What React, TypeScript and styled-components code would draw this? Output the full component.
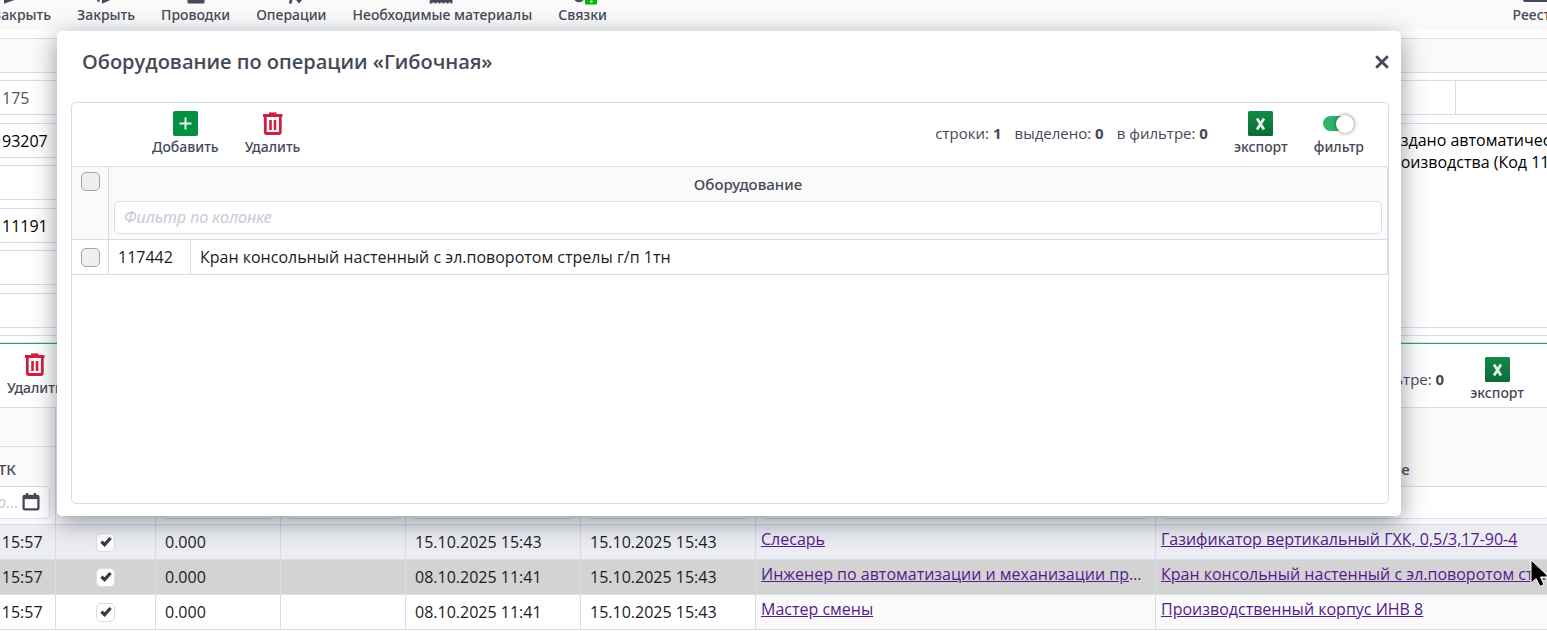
import React, { useState } from "react";
import styled, { createGlobalStyle, css } from "styled-components";

const line = "#d9dbe8";
const ink = "#454957";
const shade = "#fafafa";
const labelFont = '"Noto Sans", "Open Sans", sans-serif';

const GlobalStyle = createGlobalStyle`
  *, *::before, *::after { box-sizing: border-box; }
  html { overflow: hidden; }
  body { margin: 0; background: #fff; color: #1b1b1f; font: 400 16px/22px "Open Sans", "Noto Sans", sans-serif; }
  button, input, textarea { font: inherit; color: inherit; margin: 0; }
  table { border-collapse: separate; border-spacing: 0; table-layout: fixed; }
  th, td { padding: 0; }
`;

const Page = styled.div`
  position: relative;
  overflow: hidden;
  min-height: 100vh;
`;

const MenuBar = styled.nav`
  display: flex;
  align-items: flex-end;
  height: 30px;
  padding-bottom: 5px;
  overflow: hidden;
  background: ${shade};
`;

const MenuGroup = styled.div<{ $end?: boolean }>`
  display: flex;
  gap: 26px;
  margin-left: ${(p) => (p.$end ? "auto" : "-7px")};
  margin-right: ${(p) => (p.$end ? "-12px" : "0")};
`;

const controlLabel = css`
  display: flex;
  flex-direction: column;
  align-items: center;
  gap: 1px;
  color: ${ink};
  font-family: ${labelFont};
  font-size: 14px;
  font-weight: 500;
  line-height: 20px;
  white-space: nowrap;
  cursor: pointer;
`;

const ToolButton = styled.button`
  ${controlLabel}
  padding: 0;
  border: 0;
  background: none;
  svg { display: block; overflow: visible; }
`;

const Form = styled.form`
  padding-top: 8px;
`;

const Heading = styled.div`
  height: 35px;
  border: solid ${line};
  border-width: 1px 0;
  background: ${shade};
`;

const FormGrid = styled.div`
  display: grid;
  grid-template-columns: 1fr 175px;
  padding: 7px 0;
`;

const FieldPairs = styled.div`
  display: grid;
  gap: 7px;
`;

const FieldPair = styled.div`
  display: grid;
  gap: 8px;
`;

const fieldBox = css`
  border: solid ${line};
  border-width: 1px 0;
  border-radius: 0;
  background: #fff;
  outline: none;
`;

const Field = styled.input`
  ${fieldBox}
  width: 100%;
  height: 35px;
  padding: 0 2px;
  color: #000;
  &:disabled { color: #555; }
`;

const NotesColumn = styled.div`
  display: grid;
  grid-template-rows: 35px 1fr;
  gap: 8px;
`;

const SplitField = styled.div`
  display: grid;
  grid-template-columns: 83px 1fr;
  ${Field} + ${Field} { border-left-width: 1px; }
`;

const Notes = styled.textarea`
  ${fieldBox}
  width: 300px;
  padding: 5px 9px;
  color: #000;
  resize: none;
  overflow: hidden;
`;

const Section = styled.section`
  border-top: 1px solid ${line};
`;

const GridBar = styled.div<{ $accent?: boolean }>`
  display: flex;
  align-items: flex-start;
  justify-content: space-between;
  height: ${(p) => (p.$accent ? "65px" : "64px")};
  border-bottom: 1px solid ${line};
  ${(p) => p.$accent && "margin-top: 7px; border-top: 1px solid #2fa071; box-shadow: 0 -1px #cfeadf;"}
`;

const Actions = styled.div<{ $inset: number }>`
  display: flex;
  gap: 26px;
  padding: 8px 0 0 ${(p) => p.$inset}px;
`;

const Summary = styled.div<{ $inset: number; $top: number }>`
  display: flex;
  gap: 26px;
  padding: ${(p) => p.$top}px ${(p) => p.$inset}px 0 0;
`;

const Counters = styled.div`
  display: flex;
  gap: 13px;
  padding-top: 12px;
  color: ${ink};
  font-size: 15px;
  line-height: 20px;
  white-space: nowrap;
`;

const ScrolledTable = styled.div`
  margin-left: -93px;
`;

const JobsTable = styled.table`
  width: 1649px;
`;

const HeadCell = styled.th<{ $group?: boolean }>`
  height: ${(p) => (p.$group ? "39px" : "78px")};
  padding: 0 5px 5px;
  border: solid ${line};
  border-width: 0 1px 1px 0;
  background: ${shade};
  color: ${ink};
  font-family: ${labelFont};
  font-size: 15px;
  font-weight: 500;
  line-height: 22px;
  text-align: center;
  vertical-align: bottom;
`;

const FilterBox = styled.div`
  display: flex;
  align-items: center;
  height: 33px;
  margin-top: 6px;
  padding: 0 9px 2px;
  border: 1px solid ${line};
  border-radius: 5px;
  background: #fff;
  svg { flex: none; }
`;

const FilterInput = styled.input`
  flex: 1;
  min-width: 0;
  padding: 0;
  border: 0;
  outline: 0;
  background: none;
  font-size: 16px;
  font-weight: 400;
  text-overflow: ellipsis;
  &::placeholder { color: #c5cbd8; font-style: italic; opacity: 1; }
`;

const rowColours = { hover: "#ecedf2", selected: "#d3d3d3", plain: "#fff" };

const Row = styled.tr<{ $tone: keyof typeof rowColours }>`
  background: ${(p) => rowColours[p.$tone]};
`;

const Cell = styled.td<{ $kind?: "link" | "check"; $soft?: boolean }>`
  height: 35px;
  padding: 0 9px;
  border: solid ${line};
  border-width: 0 1px 1px 0;
  overflow: hidden;
  white-space: nowrap;
  ${(p) => p.$soft && `background: ${shade};`}
  ${(p) => p.$kind === "link" && "padding: 0 5px 6px;"}
  ${(p) => p.$kind === "check" && "padding: 0;"}
`;

const CellLink = styled.a`
  display: block;
  overflow: hidden;
  color: #551a8b;
  text-overflow: ellipsis;
`;

const Tick = styled.span`
  display: grid;
  justify-content: center;
  > * { grid-area: 1 / 1; place-self: center; }
  svg { pointer-events: none; }
`;

const TickInput = styled.input<{ $muted?: boolean }>`
  appearance: none;
  width: 19px;
  height: 19px;
  border: 1px solid ${(p) => (p.$muted ? "#a3a3a3" : line)};
  border-radius: 5px;
  background: ${(p) => (p.$muted ? "#efefef" : "#fff")};
`;

const Dialog = styled.div`
  position: absolute;
  top: 31px;
  left: 57px;
  right: 146px;
  height: 485px;
  display: flex;
  flex-direction: column;
  padding: 0 12px 12px 14px;
  border-radius: 5px;
  background: #fff;
  box-shadow: 0 6px 24px rgba(40, 50, 70, 0.5);
`;

const DialogHead = styled.header`
  display: flex;
  align-items: center;
  justify-content: space-between;
  height: 71px;
  padding: 0 0 10px 11px;
`;

const DialogTitle = styled.h2`
  margin: 0;
  color: ${ink};
  font-size: 20px;
  font-weight: 600;
  line-height: 28px;
`;

const CloseButton = styled.button`
  display: flex;
  padding: 0;
  border: 0;
  background: none;
  color: ${ink};
  cursor: pointer;
`;

const Panel = styled.div`
  flex: 1;
  border: 1px solid ${line};
  border-radius: 5px;
`;

const EquipmentTable = styled.table`
  width: 100%;
  ${HeadCell} { height: 73px; }
  ${HeadCell}:first-child { padding-top: 5px; vertical-align: top; }
`;

const Switch = styled.label`
  ${controlLabel}
`;

const SwitchInput = styled.input`
  appearance: none;
  display: flex;
  align-items: center;
  width: 31px;
  height: 15px;
  margin: 5px 0;
  border-radius: 8px;
  background: #b5b8c2;
  &::before {
    content: "";
    width: 18px;
    height: 18px;
    border-radius: 50%;
    background: #fff;
    box-shadow: 0 0 4px rgba(0, 0, 0, 0.5);
  }
  &:checked { justify-content: flex-end; background: #2fb36d; }
`;

const Pointer = styled.svg`
  position: absolute;
  top: 559px;
  right: 0;
  pointer-events: none;
`;

const PlusIcon = () => (
  <svg width="25" height="25" viewBox="0 0 25 25">
    <rect width="25" height="25" rx="2" fill="#058f41" />
    <path d="M12.5 6.5v12M6.5 12.5h12" stroke="#e6f6ec" strokeWidth="2" />
  </svg>
);

const TrashIcon = () => (
  <svg width="25" height="25" viewBox="0 0 25 25" fill="none" stroke="#d01f45">
    <path d="M3 4.5h19.5" strokeWidth="3" />
    <path d="M9 2.400h7.500" strokeWidth="2" />
    <path d="M5.300 6v15a1.500 1.500 0 0 0 1.500 1.500h12a1.500 1.500 0 0 0 1.500-1.500V6" strokeWidth="2.800" />
    <path d="M10.500 9v10M15 9v10" strokeWidth="2.600" />
  </svg>
);

const ExcelIcon = () => (
  <svg width="25" height="25" viewBox="0 0 25 25">
    <defs>
      <linearGradient id="excel" x2="0" y2="1">
        <stop stopColor="#128a47" />
        <stop offset="1" stopColor="#0d6b37" />
      </linearGradient>
    </defs>
    <rect width="25" height="25" rx="1.5" fill="url(#excel)" />
    <path d="M9 7.500l7 11M16 7.500l-7 11" stroke="#dff3e6" strokeWidth="2.700" />
  </svg>
);

const CalendarIcon = () => (
  <svg width="18" height="19" viewBox="0 0 18 20" fill="none" stroke={ink}>
    <rect x="1.200" y="4.200" width="15.600" height="14" rx="1" strokeWidth="2.400" />
    <path d="M1 5.500h16" strokeWidth="4" />
    <path d="M4.800 1v4M13.200 1v4" strokeWidth="2.400" />
  </svg>
);

const CheckMark = () => (
  <svg width="12" height="12" viewBox="0 0 12 12" fill="none" stroke="#3b3b3f" strokeWidth="3.200">
    <path d="M1.400 5.600l3.200 3L10.600 2" />
  </svg>
);

const CrossIcon = () => (
  <svg width="14" height="14" viewBox="0 0 14 14" stroke="currentColor" strokeWidth="2.800">
    <path d="M1.200 1.200l11.600 11.600M12.800 1.200L1.200 12.800" />
  </svg>
);

const MenuIcon = ({ children }: { children: React.ReactNode }) => (
  <svg width="26" height="20" viewBox="0 0 26 20" fill={ink}>{children}</svg>
);

const menu: { label: string; icon: React.ReactNode }[] = [
  { label: "Закрыть", icon: <path d="M-5 2l16 8v4L-5 19.800z" /> },
  { label: "Закрыть", icon: <path d="M4 4h2.500v14.500L4 17zM9 2l17 10L9 19.800z" /> },
  { label: "Проводки", icon: <path d="M4.500 3h17v15.200q0 1.300-1.300 1.300H5.800q-1.300 0-1.300-1.300z" /> },
  { label: "Операции", icon: <path d="M12 19.500l4-12M15 10l6 7.500 3.500-4" fill="none" stroke={ink} strokeWidth="2.600" /> },
  {
    label: "Необходимые материалы",
    icon: <path d="M2.500 4h21v15.500h-2v-1h-2v1h-2v-1h-2v1h-2v-1h-2v1h-2v-1h-2v1h-2v-1h-2v1h-3z" />,
  },
  {
    label: "Связки",
    icon: (
      <>
        <circle cx="9" cy="13" r="4" fill="none" stroke={ink} strokeWidth="2.600" />
        <rect x="15" y="8" width="12" height="12.500" fill="#00b900" />
        <path d="M20 17.500h2.500" stroke="#fff" strokeWidth="1.500" />
      </>
    ),
  },
];

const jobs = [
  { tone: "hover", soft: false, changed: "15.10.2025 15:43", person: "Слесарь", unit: "Газификатор вертикальный ГХК, 0,5/3,17-90-4" },
  { tone: "selected", soft: false, changed: "08.10.2025 11:41", person: "Инженер по автоматизации и механизации производства", unit: "Кран консольный настенный с эл.поворотом стрелы г/п 1тн" },
  { tone: "plain", soft: true, changed: "08.10.2025 11:41", person: "Мастер смены", unit: "Производственный корпус ИНВ 8" },
] as const;

const fields = [
  [{ label: "Номер", value: "175", disabled: true }, { label: "Код заказа", value: "93207" }],
  [{ label: "Заказчик", value: "" }, { label: "Код изделия", value: "11191" }],
  [{ label: "Изделие", value: "" }, { label: "Участок", value: "" }],
];

const columns = [
  { title: "", filter: false },
  { title: "Норма", filter: true },
  { title: "Факт", filter: true },
  { title: "Начало", filter: true },
  { title: "Окончание", filter: true },
  { title: "Исполнитель", filter: true },
  { title: "Оборудование", filter: true },
];

const Checkbox = ({ label, muted, checked = false }: { label: string; muted?: boolean; checked?: boolean }) => {
  const [on, setOn] = useState(checked);
  return (
    <Tick>
      <TickInput type="checkbox" aria-label={label} $muted={muted} checked={on} onChange={() => setOn(!on)} />
      {on && <CheckMark />}
    </Tick>
  );
};

const Counter = ({ name, value }: { name: string; value: number }) => (
  <span>{name}: <b>{value}</b></span>
);

const ExportButton = () => <ToolButton type="button"><ExcelIcon />экспорт</ToolButton>;

export default function App() {
  const [open, setOpen] = useState(true);
  return (
    <Page>
      <GlobalStyle />
      <MenuBar>
        <MenuGroup>
          {menu.map((m, i) => (
            <ToolButton key={i} type="button"><MenuIcon>{m.icon}</MenuIcon>{m.label}</ToolButton>
          ))}
        </MenuGroup>
        <MenuGroup $end>
          <ToolButton type="button"><MenuIcon><rect width="26" height="18" rx="2" /></MenuIcon>Реестр</ToolButton>
        </MenuGroup>
      </MenuBar>
      <Form>
        <Heading />
        <FormGrid>
          <FieldPairs>
            {fields.map((pair, i) => (
              <FieldPair key={i}>
                {pair.map((f) => <Field key={f.label} aria-label={f.label} defaultValue={f.value} disabled={"disabled" in f} />)}
              </FieldPair>
            ))}
          </FieldPairs>
          <NotesColumn>
            <SplitField>
              <Field aria-label="Дата" />
              <Field aria-label="Срок" />
            </SplitField>
            <Notes aria-label="Примечание" defaultValue={"Создано автоматически\nпроизводства (Код 11191)"} />
          </NotesColumn>
        </FormGrid>
      </Form>
      <Section>
        <GridBar $accent>
          <Actions $inset={7}>
            <ToolButton type="button"><TrashIcon />Удалить</ToolButton>
          </Actions>
          <Summary $inset={23} $top={13}>
            <Counters><Counter name="в фильтре" value={0} /></Counters>
            <ExportButton />
          </Summary>
        </GridBar>
        <ScrolledTable>
          <JobsTable>
            <colgroup>
              {[149, 100, 125, 125, 175, 175, 400, 400].map((w, i) => <col key={i} width={w} />)}
            </colgroup>
            <thead>
              <tr>
                <HeadCell $group />
                {columns.map((c, i) => (
                  <HeadCell key={i} rowSpan={2}>
                    {c.title}
                    {c.filter && <FilterBox><FilterInput aria-label={c.title} placeholder="Фильтр по колонке" /></FilterBox>}
                  </HeadCell>
                ))}
              </tr>
              <tr>
                <HeadCell>
                  Время ТК
                  <FilterBox><FilterInput aria-label="Время ТК" placeholder="Фильтр по колонке" /><CalendarIcon /></FilterBox>
                </HeadCell>
              </tr>
            </thead>
            <tbody>
              {jobs.map((j) => (
                <Row key={j.person} $tone={j.tone}>
                  <Cell>15.10.2025 15:57</Cell>
                  <Cell $kind="check"><Checkbox label={j.person} checked /></Cell>
                  <Cell>0.000</Cell>
                  <Cell />
                  <Cell>{j.changed}</Cell>
                  <Cell>15.10.2025 15:43</Cell>
                  <Cell $kind="link" $soft={j.soft}><CellLink href="#person">{j.person}</CellLink></Cell>
                  <Cell $kind="link" $soft={j.soft}><CellLink href="#unit">{j.unit}</CellLink></Cell>
                </Row>
              ))}
            </tbody>
          </JobsTable>
        </ScrolledTable>
      </Section>
      {open && (
        <Dialog role="dialog" aria-labelledby="dialog-title">
          <DialogHead>
            <DialogTitle id="dialog-title">Оборудование по операции «Гибочная»</DialogTitle>
            <CloseButton type="button" aria-label="Закрыть окно" onClick={() => setOpen(false)}><CrossIcon /></CloseButton>
          </DialogHead>
          <Panel>
            <GridBar>
              <Actions $inset={80}>
                <ToolButton type="button"><PlusIcon />Добавить</ToolButton>
                <ToolButton type="button"><TrashIcon />Удалить</ToolButton>
              </Actions>
              <Summary $inset={24} $top={8}>
                <Counters>
                  <Counter name="строки" value={1} />
                  <Counter name="выделено" value={0} />
                  <Counter name="в фильтре" value={0} />
                </Counters>
                <ExportButton />
                <Switch><SwitchInput type="checkbox" defaultChecked />фильтр</Switch>
              </Summary>
            </GridBar>
            <EquipmentTable>
              <colgroup><col width={37} /><col width={82} /><col /></colgroup>
              <thead>
                <tr>
                  <HeadCell><Checkbox label="Выбрать все" muted /></HeadCell>
                  <HeadCell colSpan={2}>
                    Оборудование
                    <FilterBox><FilterInput aria-label="Оборудование" placeholder="Фильтр по колонке" /></FilterBox>
                  </HeadCell>
                </tr>
              </thead>
              <tbody>
                <Row $tone="plain">
                  <Cell $kind="check"><Checkbox label="117442" muted /></Cell>
                  <Cell>117442</Cell>
                  <Cell>Кран консольный настенный с эл.поворотом стрелы г/п 1тн</Cell>
                </Row>
              </tbody>
            </EquipmentTable>
          </Panel>
        </Dialog>
      )}
      <Pointer width="17" height="30" viewBox="0 0 17 30">
        <path d="M1 1v23l5-4.500 4 8 4-2-3.500-7.500H17V16z" fill="#000" stroke="#fff" />
      </Pointer>
    </Page>
  );
}
